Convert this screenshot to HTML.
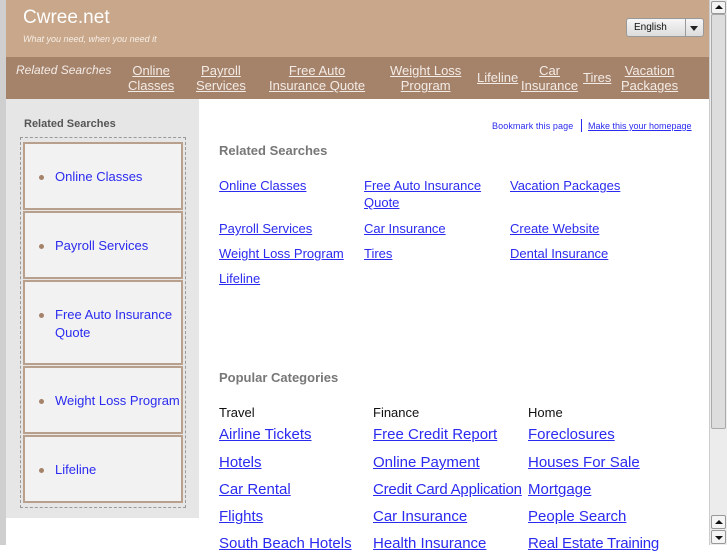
<!DOCTYPE html>
<html><head><style>
*{margin:0;padding:0;box-sizing:border-box}
body{width:727px;height:545px;overflow:hidden;background:#fff;font-family:"Liberation Sans",sans-serif;position:relative}
.abs{position:absolute}
a{color:#2b2bf0;text-decoration:underline}
#left{left:0;top:0;width:6px;height:545px;background:#cfcfcf}
#hdr{left:6px;top:0;width:703px;height:57px;background:#c9a78a}
#nav{left:6px;top:57px;width:703px;height:42px;background:#a5826a}
#nav a{color:#f3ece6;position:absolute;font-size:13px;text-align:center;line-height:15px}
#side{left:6px;top:99px;width:193px;height:419px;background:#e6e6e6}
.box{position:absolute;left:23px;width:160px;background:#f2f2f2;border:2px solid #b8a08c}
.box span{position:absolute;left:30px;color:#2b2bf0;font-size:13px;line-height:18px}
.box i{position:absolute;left:14px;width:5px;height:5px;border-radius:50%;background:#a5826a}
.c{font-size:13px;line-height:17px;position:absolute}
.p{font-size:15px;position:absolute}
#sb{left:709px;top:0;width:18px;height:545px;background:#ececec;border-left:1px solid #ccc}
</style></head><body>
<div class="abs" id="left"></div>
<div class="abs" id="hdr">
<div class="abs" style="left:17px;top:7px;font-size:19px;color:#fff">Cwree.net</div>
<div class="abs" style="left:17px;top:34px;font-size:9px;color:#f6eee6;font-style:italic">What you need, when you need it</div>
<div class="abs" style="left:620px;top:18px;width:78px;height:19px;background:linear-gradient(#f6f6f6,#dcdcdc);border:1px solid #999;border-radius:3px;font-size:10px;padding:3px 0 0 7px;color:#111">English<div class="abs" style="left:58px;top:0;width:1px;height:17px;background:#999"></div><div class="abs" style="left:63px;top:7px;border:4px solid transparent;border-top:5px solid #222"></div></div>
</div>
<div class="abs" id="nav">
<div class="abs" style="left:10px;top:6px;font-size:12px;color:#f3ece6;font-style:italic">Related Searches</div>
<a style="left:122px;top:6px">Online<br>Classes</a>
<a style="left:190px;top:6px">Payroll<br>Services</a>
<a style="left:263px;top:6px">Free Auto<br>Insurance Quote</a>
<a style="left:384px;top:6px">Weight Loss<br>Program</a>
<a style="left:471px;top:13px">Lifeline</a>
<a style="left:515px;top:6px">Car<br>Insurance</a>
<a style="left:577px;top:13px">Tires</a>
<a style="left:615px;top:6px">Vacation<br>Packages</a>
</div>
<div class="abs" id="side">
<div class="abs" style="left:18px;top:19px;font-size:11px;font-weight:bold;color:#555">Related Searches</div>
<div class="abs" style="left:14px;top:38px;width:166px;height:371px;border:1px dashed #999"></div>
</div>
<div class="box" style="top:142px;height:68px"><i style="top:31px"></i><span style="top:24px">Online Classes</span></div>
<div class="box" style="top:211px;height:68px"><i style="top:31px"></i><span style="top:24px">Payroll Services</span></div>
<div class="box" style="top:280px;height:85px"><i style="top:31px"></i><span style="top:24px">Free Auto Insurance<br>Quote</span></div>
<div class="box" style="top:366px;height:68px"><i style="top:31px"></i><span style="top:24px">Weight Loss Program</span></div>
<div class="box" style="top:435px;height:68px"><i style="top:31px"></i><span style="top:24px">Lifeline</span></div>

<div class="abs" style="left:492px;top:121px;font-size:9px;color:#2b2bf0;letter-spacing:0.1px">Bookmark this page</div>
<div class="abs" style="left:581px;top:119px;width:1px;height:13px;background:#2b2bf0"></div>
<div class="abs" style="left:588px;top:121px;font-size:9px"><a>Make this your homepage</a></div>

<div class="abs" style="left:219px;top:143px;font-size:13px;font-weight:bold;color:#777">Related Searches</div>
<a class="c" style="left:219px;top:177px">Online Classes</a>
<a class="c" style="left:364px;top:177px">Free Auto Insurance<br>Quote</a>
<a class="c" style="left:510px;top:177px">Vacation Packages</a>
<a class="c" style="left:219px;top:220px">Payroll Services</a>
<a class="c" style="left:364px;top:220px">Car Insurance</a>
<a class="c" style="left:510px;top:220px">Create Website</a>
<a class="c" style="left:219px;top:245px">Weight Loss Program </a>
<a class="c" style="left:364px;top:245px">Tires</a>
<a class="c" style="left:510px;top:245px">Dental Insurance</a>
<a class="c" style="left:219px;top:270px">Lifeline</a>

<div class="abs" style="left:219px;top:370px;font-size:13px;font-weight:bold;color:#777">Popular Categories</div>
<div class="abs" style="left:219px;top:405px;font-size:13px;color:#111">Travel</div>
<div class="abs" style="left:373px;top:405px;font-size:13px;color:#111">Finance</div>
<div class="abs" style="left:528px;top:405px;font-size:13px;color:#111">Home</div>
<a class="p" style="left:219px;top:426px">Airline Tickets</a>
<a class="p" style="left:219px;top:454px">Hotels</a>
<a class="p" style="left:219px;top:481px">Car Rental</a>
<a class="p" style="left:219px;top:508px">Flights</a>
<a class="p" style="left:219px;top:535px">South Beach Hotels</a>
<a class="p" style="left:373px;top:426px">Free Credit Report</a>
<a class="p" style="left:373px;top:454px">Online Payment</a>
<a class="p" style="left:373px;top:481px;letter-spacing:-0.2px">Credit Card Application</a>
<a class="p" style="left:373px;top:508px">Car Insurance</a>
<a class="p" style="left:373px;top:535px">Health Insurance</a>
<a class="p" style="left:528px;top:426px">Foreclosures</a>
<a class="p" style="left:528px;top:454px">Houses For Sale</a>
<a class="p" style="left:528px;top:481px">Mortgage</a>
<a class="p" style="left:528px;top:508px">People Search</a>
<a class="p" style="left:528px;top:535px;letter-spacing:-0.2px">Real Estate Training</a>

<div class="abs" id="sb">
<div class="abs" style="left:1px;top:1px;width:15px;height:13px;background:#f4f4f4;border:1px solid #999;border-radius:2px"><div class="abs" style="left:3px;top:3px;border:4px solid transparent;border-bottom:4px solid #111;border-top:0"></div></div>
<div class="abs" style="left:1px;top:14px;width:15px;height:415px;background:#ddd;border:1px solid #aaa;border-radius:2px"></div>
<div class="abs" style="left:1px;top:515px;width:15px;height:14px;background:#f4f4f4;border:1px solid #999;border-radius:2px"><div class="abs" style="left:3px;top:4px;border:4px solid transparent;border-bottom:4px solid #111;border-top:0"></div></div>
<div class="abs" style="left:1px;top:530px;width:15px;height:14px;background:#f4f4f4;border:1px solid #999;border-radius:2px"><div class="abs" style="left:3px;top:5px;border:4px solid transparent;border-top:4px solid #111;border-bottom:0"></div></div>
</div>
</body></html>
